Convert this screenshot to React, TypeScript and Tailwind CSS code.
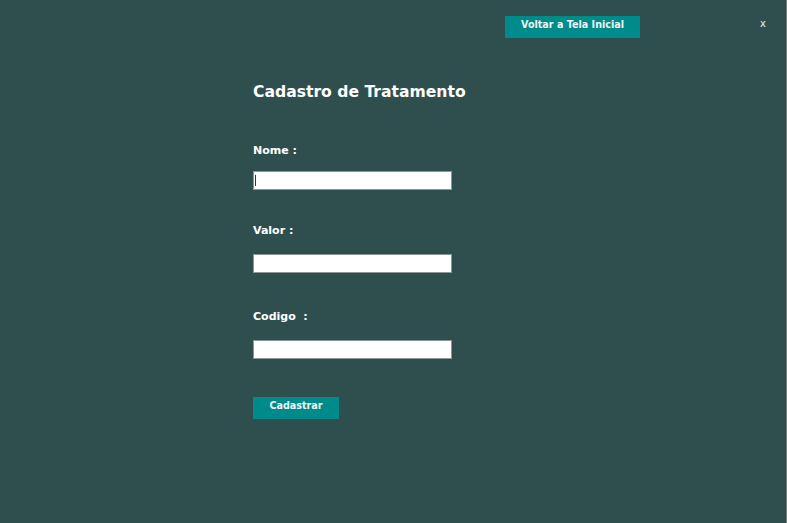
import React from "react";

export default function App() {
  const font = { fontFamily: '"DejaVu Sans", "Liberation Sans", sans-serif' };
  return (
    <div
      className="w-[787px] h-[523px] bg-[#2F4F4F] flex flex-col overflow-hidden border-r border-[#6f7f7f]"
      style={font}
    >
      <div className="flex items-start pt-[16px]">
        <button className="ml-[505px] w-[135px] h-[22px] bg-[#008B8B] text-[#f0f4f4] text-[9.6px] font-bold leading-none flex items-center justify-center pb-[5px]">
          Voltar a Tela Inicial
        </button>
        <span className="ml-[120px] mt-[3px] text-[10px] leading-[10px] text-[#e6ecec]">x</span>
      </div>
      <div className="flex flex-col pl-[253px]">
        <h1 className="mt-[44px] text-[15.6px] leading-[20px] font-bold text-white">Cadastro de Tratamento</h1>
        <label className="mt-[42px] text-[11px] leading-[14px] font-bold text-white">Nome :</label>
        <div className="mt-[13px] w-[199px] h-[19px] bg-white border border-[#8c9696] relative">
          <span className="absolute left-[1px] top-[3px] w-[1px] h-[11px] bg-[#333]" />
        </div>
        <label className="mt-[34px] text-[11px] leading-[14px] font-bold text-white">Valor :</label>
        <div className="mt-[16px] w-[199px] h-[19px] bg-white border border-[#8c9696]" />
        <label className="mt-[37px] text-[11px] leading-[14px] font-bold text-white whitespace-pre">Codigo  :</label>
        <div className="mt-[16px] w-[199px] h-[19px] bg-white border border-[#8c9696]" />
        <button className="mt-[38px] w-[86px] h-[22px] bg-[#008B8B] text-[#f0f4f4] text-[9.6px] font-bold leading-none flex items-center justify-center pb-[5px]">
          Cadastrar
        </button>
      </div>
    </div>
  );
}
